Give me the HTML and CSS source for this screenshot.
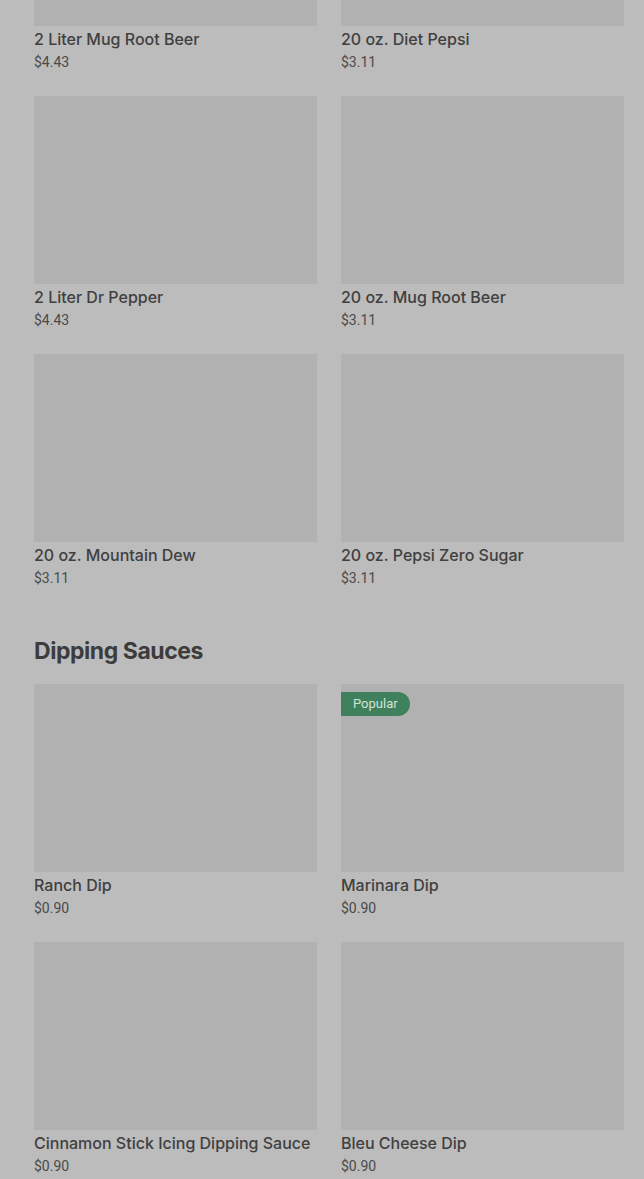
FILE: index.html
```html
<!DOCTYPE html>
<html>
<head>
<meta charset="utf-8">
<link rel="stylesheet" href="styles.css">
</head>
<body>
<div class="page">
  <section class="section first">
    <div class="grid">
      <div class="card"><div class="thumb"></div><div class="name">2 Liter Mug Root Beer</div><div class="price">$4.43</div></div>
      <div class="card"><div class="thumb"></div><div class="name">20 oz. Diet Pepsi</div><div class="price">$3.11</div></div>
      <div class="card"><div class="thumb"></div><div class="name">2 Liter Dr Pepper</div><div class="price">$4.43</div></div>
      <div class="card"><div class="thumb"></div><div class="name">20 oz. Mug Root Beer</div><div class="price">$3.11</div></div>
      <div class="card"><div class="thumb"></div><div class="name">20 oz. Mountain Dew</div><div class="price">$3.11</div></div>
      <div class="card"><div class="thumb"></div><div class="name">20 oz. Pepsi Zero Sugar</div><div class="price">$3.11</div></div>
    </div>
  </section>
  <section class="section">
    <h2 class="heading">Dipping Sauces</h2>
    <div class="grid">
      <div class="card"><div class="thumb"></div><div class="name">Ranch Dip</div><div class="price">$0.90</div></div>
      <div class="card"><div class="thumb"><span class="badge">Popular</span></div><div class="name">Marinara Dip</div><div class="price">$0.90</div></div>
      <div class="card"><div class="thumb"></div><div class="name">Cinnamon Stick Icing Dipping Sauce</div><div class="price">$0.90</div></div>
      <div class="card"><div class="thumb"></div><div class="name">Bleu Cheese Dip</div><div class="price">$0.90</div></div>
    </div>
  </section>
</div>
</body>
</html>
```

FILE: styles.css
```css
html, body {
  margin: 0;
  padding: 0;
  background: #bcbcbc;
  overflow: hidden;
}
body {
  font-family: Roboto, "Liberation Sans", sans-serif;
  color: #3e3e3e;
}
.page {
  padding: 0 20px 0 34px;
}
.section.first {
  margin-top: -162px;
}
.grid {
  display: grid;
  grid-template-columns: 283px 283px;
  column-gap: 24px;
  row-gap: 24px;
}
.card {
  display: flex;
  flex-direction: column;
}
.thumb {
  position: relative;
  height: 188px;
  background: #b1b1b1;
}
.name {
  margin-top: 4px;
  font-family: Inter, Roboto, sans-serif;
  font-size: 16px;
  line-height: 18px;
  font-weight: 500;
  color: #404040;
  white-space: nowrap;
}
.price {
  margin-top: 4px;
  font-size: 14px;
  line-height: 20px;
  color: #4a4a4a;
}
.heading {
  margin: 47px 0 17px;
  font-family: Inter, "Noto Sans", sans-serif;
  font-size: 23px;
  line-height: 32px;
  font-weight: 700;
  letter-spacing: -0.45px;
  color: #3c3c3c;
}
.badge {
  position: absolute;
  left: 0;
  top: 8px;
  height: 24px;
  padding: 0 12px;
  border-radius: 0 12px 12px 0;
  background: #3f815d;
  color: #d3e3d8;
  font-size: 13px;
  line-height: 24px;
}
```
